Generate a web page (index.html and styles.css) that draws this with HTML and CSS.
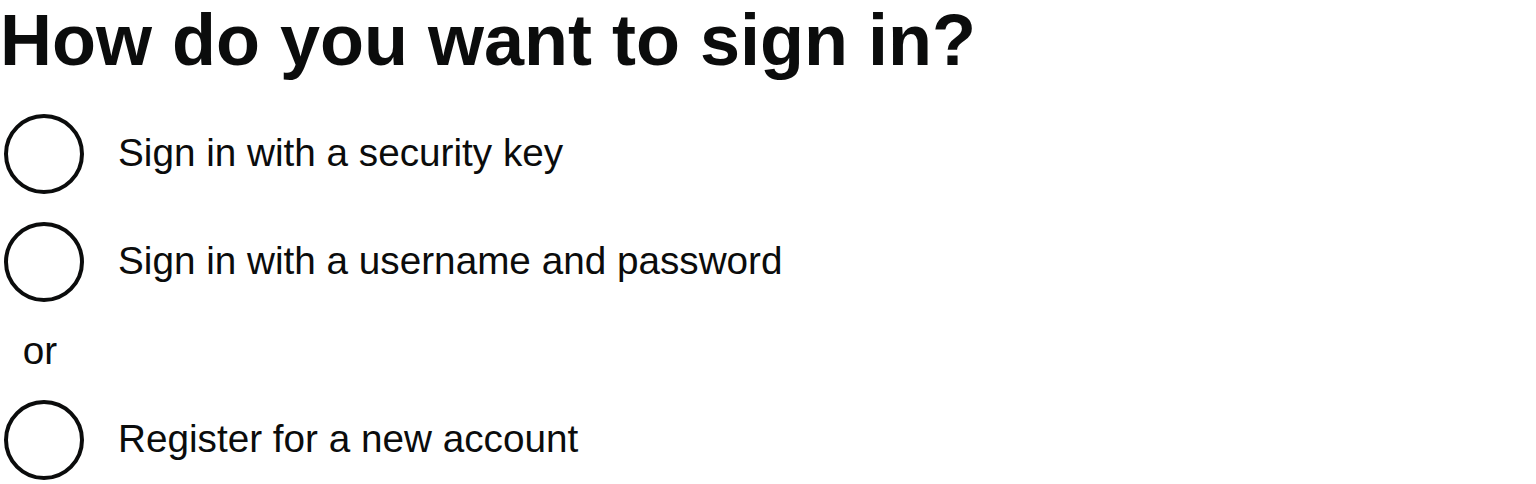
FILE: index.html
```html
<!DOCTYPE html>
<html lang="en">
<head>
<meta charset="utf-8">
<title>How do you want to sign in?</title>
<link rel="stylesheet" href="styles.css">
</head>
<body>
<main class="page">
  <h1 class="heading">How do you want to sign in?</h1>
  <div class="radios">
    <div class="radio-item">
      <span class="radio-box"><span class="radio-circle"></span></span>
      <label class="radio-label">Sign in with a security key</label>
    </div>
    <div class="radio-item">
      <span class="radio-box"><span class="radio-circle"></span></span>
      <label class="radio-label">Sign in with a username and password</label>
    </div>
    <div class="radio-divider">or</div>
    <div class="radio-item">
      <span class="radio-box"><span class="radio-circle"></span></span>
      <label class="radio-label">Register for a new account</label>
    </div>
  </div>
</main>
</body>
</html>
```
FILE: styles.css
```css
html, body {
  margin: 0;
  padding: 0;
  background: #ffffff;
}
body {
  font-family: "Liberation Sans", Arial, sans-serif;
  color: #0b0c0c;
}
.heading {
  margin: 0 0 30px 0;
  font-size: 72px;
  line-height: 80px;
  font-weight: 700;
}
.radios {
  display: flex;
  flex-direction: column;
}
.radio-item {
  display: flex;
  margin-bottom: 20px;
}
.radio-box {
  width: 88px;
  height: 88px;
  flex: none;
  display: flex;
  align-items: center;
  justify-content: center;
}
.radio-circle {
  width: 80px;
  height: 80px;
  box-sizing: border-box;
  border: 4px solid #0b0c0c;
  border-radius: 50%;
  background: #ffffff;
}
.radio-label {
  align-self: center;
  padding: 11px 30px 13px;
  font-size: 38.7px;
  line-height: 50px;
}
.radio-divider {
  width: 80px;
  margin-bottom: 20px;
  text-align: center;
  font-size: 38.7px;
  line-height: 50px;
}
```
